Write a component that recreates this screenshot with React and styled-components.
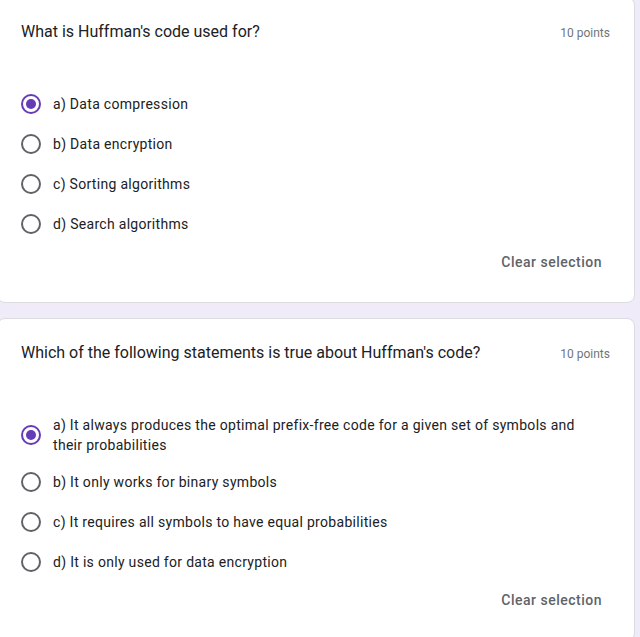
import React from 'react';
import styled, { createGlobalStyle } from 'styled-components';

const GlobalStyle = createGlobalStyle`
  body {
    margin: 0;
    background-color: #f0ebf8;
    font-family: Roboto, "Liberation Sans", Arial, sans-serif;
  }
`;

const Page = styled.div`
  width: 640px;
  height: 637px;
  overflow: hidden;
  padding-right: 5px;
  box-sizing: border-box;
  background-color: #f0ebf8;
`;

const Card = styled.div`
  margin: ${({ $first }) => ($first ? '-3px' : '15px')} 0 0 -3px;
  background: #fff;
  border: 1px solid #dadce0;
  border-radius: 8px;
  padding: 22px 24px 22px 23px;
  display: flex;
  flex-direction: column;
`;

const Header = styled.div`
  display: flex;
  align-items: baseline;
  justify-content: space-between;
  margin-bottom: ${({ $first }) => ($first ? '40px' : '43px')};
`;

const Title = styled.div`
  color: #202124;
  font-size: 16px;
  line-height: 24px;
`;

const Points = styled.span`
  color: #70757a;
  font-size: 12px;
  line-height: 16px;
  white-space: nowrap;
  margin-left: 16px;
`;

const Options = styled.div`
  display: flex;
  flex-direction: column;
`;

const Option = styled.label`
  display: flex;
  align-items: center;
  padding: 7px 24px 7px 0;
  cursor: pointer;
`;

const RadioBox = styled.span`
  flex: none;
  width: 20px;
  height: 26px;
  display: flex;
  align-items: center;
  justify-content: center;
`;

const Radio = styled.span`
  width: 20px;
  height: 20px;
  box-sizing: border-box;
  border-radius: 50%;
  border: 2px solid ${({ $checked }) => ($checked ? '#673ab7' : '#5f6368')};
  display: flex;
  align-items: center;
  justify-content: center;

  &::after {
    content: '';
    width: 10px;
    height: 10px;
    border-radius: 50%;
    background: #673ab7;
    display: ${({ $checked }) => ($checked ? 'block' : 'none')};
  }
`;

const OptionText = styled.span`
  margin-left: 12px;
  color: #202124;
  font-size: 14px;
  line-height: 20px;
  letter-spacing: 0.3px;
`;

const ClearButton = styled.button`
  align-self: flex-end;
  height: 36px;
  padding: 0 8px;
  border: none;
  border-radius: 4px;
  background: transparent;
  color: #5f6368;
  font-family: Roboto, "Liberation Sans", Arial, sans-serif;
  font-size: 14px;
  font-weight: 500;
  letter-spacing: 0.5px;
  cursor: pointer;
`;

const questions = [
  {
    title: "What is Huffman's code used for?",
    options: [
      'a) Data compression',
      'b) Data encryption',
      'c) Sorting algorithms',
      'd) Search algorithms',
    ],
    selected: 0,
  },
  {
    title: "Which of the following statements is true about Huffman's code?",
    options: [
      'a) It always produces the optimal prefix-free code for a given set of symbols and their probabilities',
      'b) It only works for binary symbols',
      'c) It requires all symbols to have equal probabilities',
      'd) It is only used for data encryption',
    ],
    selected: 0,
  },
];

function Question({ title, options, selected, first }) {
  return (
    <Card $first={first}>
      <Header $first={first}>
        <Title>{title}</Title>
        <Points>10 points</Points>
      </Header>
      <Options>
        {options.map((text, i) => (
          <Option key={text}>
            <RadioBox>
              <Radio $checked={i === selected} />
            </RadioBox>
            <OptionText>{text}</OptionText>
          </Option>
        ))}
      </Options>
      <ClearButton>Clear selection</ClearButton>
    </Card>
  );
}

export default function App() {
  return (
    <Page>
      <GlobalStyle />
      {questions.map((q, i) => (
        <Question key={q.title} {...q} first={i === 0} />
      ))}
    </Page>
  );
}
